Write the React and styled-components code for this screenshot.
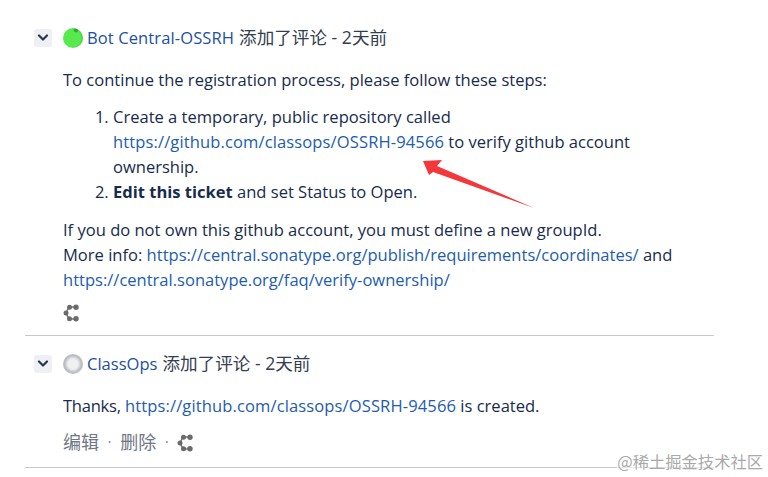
import React from 'react';
import styled, { createGlobalStyle } from 'styled-components';

const Global = createGlobalStyle`
  html, body { margin: 0; padding: 0; background: #fff; }
  body { width: 768px; height: 477px; overflow: hidden; font-family: "Open Sans", "Noto Sans CJK SC", sans-serif; color: #172b4d; font-size: 16.55px; line-height: 25px; }
`;
const Page = styled.div`position: relative; width: 768px; height: 477px; padding: 0 54px 0 25px; box-sizing: border-box;`;
const Comment = styled.section`
  border-bottom: 1px solid #c9c9c9;
  padding-top: ${p => p.$top}px;
  padding-bottom: ${p => p.$bottom}px;
`;
const Header = styled.div`display: flex; align-items: center; height: 25px; color: #333d4f;`;
const Toggle = styled.button`
  width: 18px; height: 18px; margin: 0 11px 0 9px; padding: 0; border: 0; border-radius: 3px;
  background: #eef0f3; color: #2a3650; display: flex; align-items: center; justify-content: center;
`;
const Avatar = styled.span`
  width: 20px; height: 20px; margin-right: 4px; border-radius: 50%; flex: none; display: block;
  background: ${p => p.$bg};
`;
const Name = styled.a`color: #1d4fa3; text-decoration: none; margin-right: 5px; letter-spacing: ${p => p.$track || 0}px;`;
const Cjk = styled.span`font-size: 17.6px; white-space: pre;`;
const Body = styled.div`padding-left: 38px; margin-top: ${p => p.$top}px;`;
const Para = styled.p`margin: 0 0 ${p => p.$bottom || 0}px;`;
const Tight = styled.span`letter-spacing: -0.25px;`;
const Steps = styled.ol`margin: 0 0 13px; padding: 0 40px 0 50px;`;
const Link = styled.a`color: #1d5cb0; text-decoration: none; letter-spacing: ${p => p.$track || 0}px;`;
const ActionRow = styled.div`display: flex; align-items: center; gap: 8.5px; height: 25px; color: #6f7785; font-size: 18px;`;
const Dot = styled.span`color: #8a919c; font-size: 16px;`;
const IconRow = styled.div`height: 25px; margin-top: 8px; display: flex; align-items: center;`;
const Overlay = styled.svg`position: absolute; left: 0; top: 0; pointer-events: none;`;
const Watermark = styled.div`
  position: absolute; right: 5px; top: 449px; font-size: 16.3px; line-height: 24px; color: #a9a9a9;
  font-family: "Noto Sans CJK SC", sans-serif; background: rgba(255,255,255,.55); white-space: nowrap;
`;

const Chevron = () => (
  <svg width="12" height="8" viewBox="0 0 12 8"><path d="M2 1.5 L6 5.5 L10 1.5" fill="none" stroke="currentColor" strokeWidth="2.2" strokeLinecap="round" strokeLinejoin="round"/></svg>
);
const Nodes = () => (
  <svg width="16" height="18" viewBox="0 0 16 18">
    <path d="M13 3 H6 L3 9 L6 15 H13" fill="none" stroke="#777" strokeWidth="1.6"/>
    <circle cx="13" cy="3.2" r="2.7" fill="#6b6b6b"/><circle cx="6.5" cy="3.2" r="2.5" fill="#6b6b6b"/>
    <circle cx="3" cy="9" r="2.5" fill="#6b6b6b"/><circle cx="6.5" cy="14.8" r="2.5" fill="#6b6b6b"/><circle cx="13" cy="14.8" r="2.7" fill="#6b6b6b"/>
  </svg>
);

export default function App() {
  return (
    <Page>
      <Global />
      <Comment $top={25} $bottom={10}>
        <Header>
          <Toggle><Chevron /></Toggle>
          <Avatar $bg="radial-gradient(circle at 13px 2px, rgba(30,140,40,.7) 0 1.5px, transparent 3px), radial-gradient(circle at 8px 10px, #58ea4c 60%, #2aa52c 100%)" />
          <Name $track={0.1}>Bot Central-OSSRH</Name><Cjk>添加了评论 - 2天前</Cjk>
        </Header>
        <Body $top={17}>
          <Para $bottom={12}>To continue the registration process, please follow these steps:</Para>
          <Steps>
            <li>Create a temporary, public repository called <Link $track={0.12}>https://github.com/classops/OSSRH-94566</Link> to verify github account ownership.</li>
            <li><b>Edit this ticket</b> and set Status to Open.</li>
          </Steps>
          <Para>If you do not own this github account, you must define a new groupId.<br />More info: <Link>https://central.sonatype.org/publish/requirements/coordinates/</Link> and <Link>https://central.sonatype.org/faq/verify-ownership/</Link></Para>
          <IconRow><Nodes /></IconRow>
        </Body>
      </Comment>
      <Comment $top={15} $bottom={12}>
        <Header>
          <Toggle><Chevron /></Toggle>
          <Avatar $bg="radial-gradient(circle, #f0f0f2 35%, #b9bcc2 60%, #c9cbd0 100%)" />
          <Name>ClassOps</Name><Cjk>添加了评论 - 2天前</Cjk>
        </Header>
        <Body $top={17}>
          <Para $bottom={12}><Tight>Thanks,</Tight> <Link $track={0.12}>https://github.com/classops/OSSRH-94566</Link> is created.</Para>
          <ActionRow>编辑<Dot>·</Dot>删除<Dot>·</Dot><Nodes /></ActionRow>
        </Body>
      </Comment>
      <Overlay width="768" height="477" viewBox="0 0 768 477">
        <path d="M423 161 L442 160 L437 166 L534 208 L433 172 L429 175 Z" fill="#f4373a" />
      </Overlay>
      <Watermark>@稀土掘金技术社区</Watermark>
    </Page>
  );
}
